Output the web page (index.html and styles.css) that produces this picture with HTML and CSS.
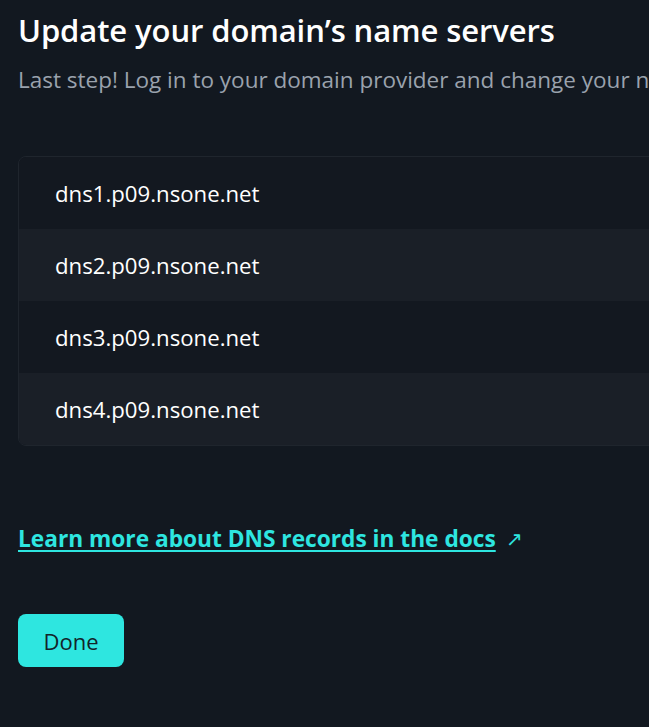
FILE: index.html
```html
<!DOCTYPE html>
<html lang="en">
<head>
<meta charset="utf-8">
<title>Update name servers</title>
<link rel="stylesheet" href="styles.css">
</head>
<body>
<main class="page">
  <h1 class="title">Update your domain’s name servers</h1>
  <p class="subtitle">Last step! Log in to your domain provider and change your name servers to the following:</p>
  <ul class="ns-list">
    <li class="ns-row">dns1.p09.nsone.net</li>
    <li class="ns-row">dns2.p09.nsone.net</li>
    <li class="ns-row">dns3.p09.nsone.net</li>
    <li class="ns-row">dns4.p09.nsone.net</li>
  </ul>
  <p class="docs"><a class="docs-link" href="#">Learn more about DNS records in the docs</a><span class="arrow">↗</span></p>
  <button class="done" type="button">Done</button>
</main>
</body>
</html>
```
FILE: styles.css
```css
html, body {
  margin: 0;
  padding: 0;
  background: #121820;
  overflow: hidden;
}
body {
  font-family: "Open Sans", "Noto Sans", sans-serif;
  color: #ffffff;
}
.page {
  width: 900px;
  padding: 10px 0 0 18px;
  box-sizing: border-box;
}
.title {
  margin: 0;
  font-size: 31px;
  font-weight: 600;
  line-height: 40px;
  letter-spacing: -0.1px;
  white-space: nowrap;
}
.subtitle {
  margin: 14px 0 0;
  font-size: 22.5px;
  line-height: 32px;
  color: #9aa2ad;
  white-space: nowrap;
}
.ns-list {
  list-style: none;
  margin: 60px 0 0;
  padding: 0;
  border: 1px solid #1f252d;
  border-radius: 8px;
  overflow: hidden;
}
.ns-row {
  height: 72px;
  display: flex;
  align-items: center;
  padding-left: 36px;
  font-size: 22.2px;
  background: #131820;
}
.ns-row:nth-child(even) {
  background: #1a1f27;
}
.docs {
  margin: 78px 0 0;
  font-size: 22.7px;
  line-height: 30px;
  display: flex;
  align-items: center;
  gap: 10px;
}
.docs-link {
  color: #2ee6e0;
  font-weight: 700;
  text-decoration: underline;
  text-decoration-thickness: 2px;
  text-underline-offset: 3px;
}
.arrow {
  color: #2ee6e0;
  font-size: 20px;
}
.done {
  margin-top: 60px;
  background: #2ee6e0;
  color: #13232a;
  border: none;
  border-radius: 8px;
  width: 106px;
  height: 53px;
  font-family: inherit;
  font-size: 22px;
  cursor: pointer;
}
```
